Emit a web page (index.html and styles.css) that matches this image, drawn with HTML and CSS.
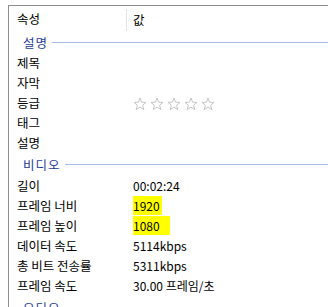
FILE: index.html
```
<!DOCTYPE html>
<html>
<head>
	<title>
		속성
	</title>

	<link rel="stylesheet" href="styles.css">
</head>
<body>
	<div class="panel">
		<div class="head-row">
			<div class="label">속성</div>
			<div class="value head-value">값</div>
		</div>

		<div class="group">
			<span class="group-name">설명</span>
			<span class="group-line"></span>
		</div>
		<div class="row"><div class="label">제목</div><div class="value"></div></div>
		<div class="row"><div class="label">자막</div><div class="value"></div></div>
		<div class="row">
			<div class="label">등급</div>
			<div class="value stars">
				<svg viewBox="0 0 14 14"><polygon points="7,1 8.6,5.2 13,5.4 9.6,8.2 10.8,12.6 7,10.1 3.2,12.6 4.4,8.2 1,5.4 5.4,5.2"/></svg>
				<svg viewBox="0 0 14 14"><polygon points="7,1 8.6,5.2 13,5.4 9.6,8.2 10.8,12.6 7,10.1 3.2,12.6 4.4,8.2 1,5.4 5.4,5.2"/></svg>
				<svg viewBox="0 0 14 14"><polygon points="7,1 8.6,5.2 13,5.4 9.6,8.2 10.8,12.6 7,10.1 3.2,12.6 4.4,8.2 1,5.4 5.4,5.2"/></svg>
				<svg viewBox="0 0 14 14"><polygon points="7,1 8.6,5.2 13,5.4 9.6,8.2 10.8,12.6 7,10.1 3.2,12.6 4.4,8.2 1,5.4 5.4,5.2"/></svg>
				<svg viewBox="0 0 14 14"><polygon points="7,1 8.6,5.2 13,5.4 9.6,8.2 10.8,12.6 7,10.1 3.2,12.6 4.4,8.2 1,5.4 5.4,5.2"/></svg>
			</div>
		</div>
		<div class="row"><div class="label">태그</div><div class="value"></div></div>
		<div class="row"><div class="label">설명</div><div class="value"></div></div>

		<div class="group">
			<span class="group-name">비디오</span>
			<span class="group-line"></span>
		</div>
		<div class="row first"><div class="label">길이</div><div class="value">00:02:24</div></div>
		<div class="row"><div class="label">프레임 너비</div><div class="value"><span class="mark">1920</span></div></div>
		<div class="row"><div class="label">프레임 높이</div><div class="value"><span class="mark wide">1080</span></div></div>
		<div class="row"><div class="label">데이터 속도</div><div class="value">5114kbps</div></div>
		<div class="row"><div class="label">총 비트 전송률</div><div class="value">5311kbps</div></div>
		<div class="row"><div class="label">프레임 속도</div><div class="value">30.00 프레임/초</div></div>

		<div class="group">
			<span class="group-name">오디오</span>
			<span class="group-line"></span>
		</div>
	</div>
</body>
</html>
```

FILE: styles.css
```
body {
	margin: 0;
	height: 307px;
	background: #fff;
	font-family: "Noto Sans CJK KR", "Noto Sans", sans-serif;
	font-size: 12px;
	color: #000;
	overflow: hidden;
}

.panel {
	margin: 5px 0 0 8px;
	border-top: 1px solid #8e8e8e;
	border-left: 1px solid #8e8e8e;
	height: 302px;
	overflow: hidden;
}

.head-row {
	display: flex;
	height: 25px;
	align-items: center;
}

.row {
	display: flex;
	height: 20px;
	align-items: center;
	line-height: 20px;
}

.row.first {
	margin-top: 1px;
}

.label {
	width: 109px;
	padding-left: 8px;
	font-size: 12.5px;
	white-space: nowrap;
}

.value {
	padding-left: 7px;
	white-space: nowrap;
}

.head-value {
	border-left: 1px solid #e3e3e3;
	padding-left: 6px;
	height: 22px;
	line-height: 22px;
	margin-top: 3px;
	font-size: 12.5px;
}

.group {
	display: flex;
	align-items: center;
	height: 22px;
	padding-left: 14px;
}

.group-name {
	color: #1e3c96;
	font-size: 12.5px;
	letter-spacing: 1px;
	margin-right: 4px;
}

.group-line {
	flex: 1;
	border-top: 1px solid #a7bce3;
}

.stars {
	display: flex;
	gap: 3px;
	padding-top: 1px;
}

.stars svg {
	width: 14px;
	height: 14px;
	fill: none;
	stroke: #c6c6c6;
	stroke-width: 1;
}

.mark {
	background: #ffff00;
	padding: 1px 2px 1px 0;
}

.mark.wide {
	padding-right: 10px;
}
```
